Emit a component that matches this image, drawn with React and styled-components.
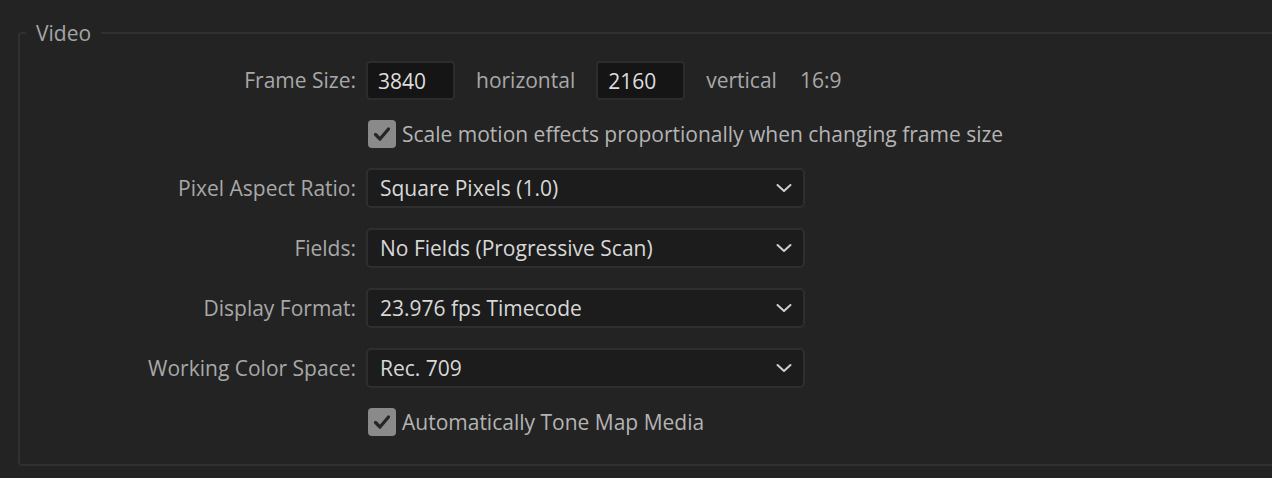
import React from 'react';
import styled, { createGlobalStyle } from 'styled-components';

const GlobalStyle = createGlobalStyle`
  html, body {
    margin: 0;
    padding: 0;
    background: #232323;
    overflow: hidden;
  }
  body {
    font-family: "Open Sans", "Noto Sans", sans-serif;
  }
`;

const Page = styled.div`
  width: 1272px;
  height: 478px;
  padding-top: 21px;
  box-sizing: border-box;
  overflow: hidden;
`;

const Group = styled.fieldset`
  margin: 0 0 0 18px;
  width: 1300px;
  box-sizing: border-box;
  border: 2px solid #303030;
  border-radius: 4px;
  padding: 15px 0 28px 6px;
  min-inline-size: 0;
`;

const Legend = styled.legend`
  padding: 0 10px;
  font-size: 21px;
  line-height: 24px;
  color: #a4a4a4;
`;

const Form = styled.div`
  display: flex;
  flex-direction: column;
  gap: 20px;
  margin-left: -6px;
`;

const Row = styled.div`
  display: grid;
  grid-template-columns: 336px 1fr;
  column-gap: 10px;
  align-items: center;
  height: ${props => props.$short ? '28px' : '40px'};
`;

const Label = styled.div`
  text-align: right;
  font-size: 21px;
  color: #a8a8a8;
  white-space: nowrap;
`;

const Inline = styled.div`
  display: flex;
  align-items: center;
  gap: 21px;
`;

const NumberField = styled.div`
  width: 89px;
  height: 39px;
  box-sizing: border-box;
  background: #151515;
  border: 2px solid #2c2c2c;
  border-radius: 4px;
  padding: 2px 0 0 10px;
  display: flex;
  align-items: center;
  font-size: 21px;
  color: #dedede;
`;

const Unit = styled.span`
  font-size: 21px;
  color: #a8a8a8;
  white-space: nowrap;
  margin-left: ${props => props.$push ? '2px' : '0'};
`;

const Check = styled.label`
  display: flex;
  align-items: center;
  gap: 6px;
  margin-left: 2px;
  font-size: 21px;
  color: #b4b4b4;
  white-space: nowrap;
`;

const Box = styled.span`
  width: 28px;
  height: 28px;
  border-radius: 4px;
  background: #8a8a8a;
  display: flex;
  align-items: center;
  justify-content: center;
`;

const Select = styled.div`
  width: 439px;
  height: 40px;
  box-sizing: border-box;
  background: #1c1c1c;
  border: 2px solid #2e2e2e;
  border-radius: 5px;
  padding: 0 11px 0 12px;
  display: flex;
  align-items: center;
  justify-content: space-between;
  font-size: 21px;
  color: #d8d8d8;
`;

function CheckMark() {
  return (
    <svg width="18" height="16" viewBox="0 0 18 16">
      <path d="M2.5 8.5 L7 13 L15.5 3" fill="none" stroke="#262626" strokeWidth="3.2" strokeLinecap="round" strokeLinejoin="round" />
    </svg>
  );
}

function Chevron() {
  return (
    <svg width="16" height="10" viewBox="0 0 16 10">
      <path d="M1.5 2 L8 8 L14.5 2" fill="none" stroke="#cfcfcf" strokeWidth="2" strokeLinecap="round" strokeLinejoin="round" />
    </svg>
  );
}

const selects = [
  { label: 'Pixel Aspect Ratio:', value: 'Square Pixels (1.0)' },
  { label: 'Fields:', value: 'No Fields (Progressive Scan)' },
  { label: 'Display Format:', value: '23.976 fps Timecode' },
  { label: 'Working Color Space:', value: 'Rec. 709' },
];

export default function App() {
  return (
    <Page>
      <GlobalStyle />
      <Group>
        <Legend>Video</Legend>
        <Form>
          <Row>
            <Label>Frame Size:</Label>
            <Inline>
              <NumberField>3840</NumberField>
              <Unit>horizontal</Unit>
              <NumberField>2160</NumberField>
              <Unit>vertical</Unit>
              <Unit $push>16:9</Unit>
            </Inline>
          </Row>
          <Row $short>
            <span />
            <Check>
              <Box><CheckMark /></Box>
              Scale motion effects proportionally when changing frame size
            </Check>
          </Row>
          {selects.map(s => (
            <Row key={s.label}>
              <Label>{s.label}</Label>
              <Select>
                <span>{s.value}</span>
                <Chevron />
              </Select>
            </Row>
          ))}
          <Row $short>
            <span />
            <Check>
              <Box><CheckMark /></Box>
              Automatically Tone Map Media
            </Check>
          </Row>
        </Form>
      </Group>
    </Page>
  );
}
